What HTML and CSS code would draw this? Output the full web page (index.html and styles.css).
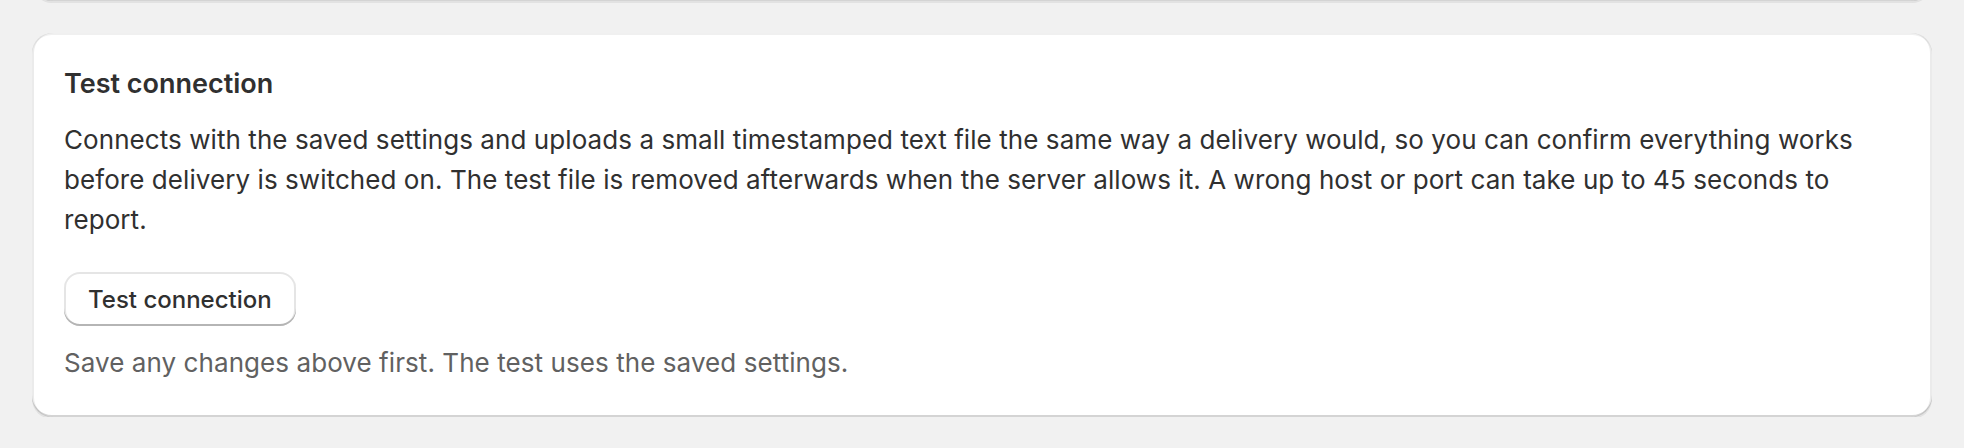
FILE: index.html
```html
<!DOCTYPE html>
<html lang="en">
<head>
<meta charset="utf-8">
<title>Test connection</title>
<link rel="stylesheet" href="styles.css">
</head>
<body>
<div class="page">
  <div class="card card-prev"></div>
  <section class="card">
    <h2 class="card-title">Test connection</h2>
    <p class="card-text">Connects with the saved settings and uploads a small timestamped text file the same way a delivery would, so you can confirm everything works before delivery is switched on. The test file is removed afterwards when the server allows it. A wrong host or port can take up to 45 seconds to report.</p>
    <div class="actions">
      <button class="btn" type="button">Test connection</button>
    </div>
    <p class="hint">Save any changes above first. The test uses the saved settings.</p>
  </section>
</div>
</body>
</html>
```

FILE: styles.css
```css
* { box-sizing: border-box; }
html, body {
  margin: 0;
  padding: 0;
  background: #f1f1f1;
}
body {
  font-family: Inter, "Noto Sans", "Liberation Sans", sans-serif;
  color: #303030;
  -webkit-font-smoothing: antialiased;
}
.page {
  padding: 0 32px;
  display: flex;
  flex-direction: column;
  gap: 32px;
}
.card {
  background: #ffffff;
  border-radius: 20px;
  padding: 32px 32px 34px;
  box-shadow:
    0 2px 0 0 rgba(26, 26, 26, 0.07),
    inset 0 -2px 0 0 rgba(0, 0, 0, 0.17),
    inset 2px 0 0 0 rgba(0, 0, 0, 0.08),
    inset -2px 0 0 0 rgba(0, 0, 0, 0.08),
    inset 0 2px 0 0 rgba(0, 0, 0, 0.06);
}
.card-prev {
  height: 40px;
  margin-top: -39px;
  padding: 0;
}
.card-title {
  margin: 0;
  font-size: 27px;
  line-height: 38px;
  font-weight: 600;
  color: #303030;
}
.card-text {
  margin: 17px 0 0;
  font-size: 26px;
  line-height: 40px;
  font-weight: 400;
  letter-spacing: 0.07px;
  color: #303030;
}
.actions {
  margin-top: 32px;
  display: flex;
}
.btn {
  font-family: inherit;
  font-size: 24px;
  font-weight: 550;
  color: #303030;
  background: #ffffff;
  height: 54px;
  padding: 0 24px;
  border: none;
  border-radius: 16px;
  box-shadow:
    inset 0 -2px 0 0 #b5b5b5,
    inset 0 0 0 2px rgba(0, 0, 0, 0.1);
  cursor: pointer;
}
.hint {
  margin: 17px 0 0;
  font-size: 26px;
  line-height: 40px;
  font-weight: 400;
  letter-spacing: 0.07px;
  color: #616161;
}
```
